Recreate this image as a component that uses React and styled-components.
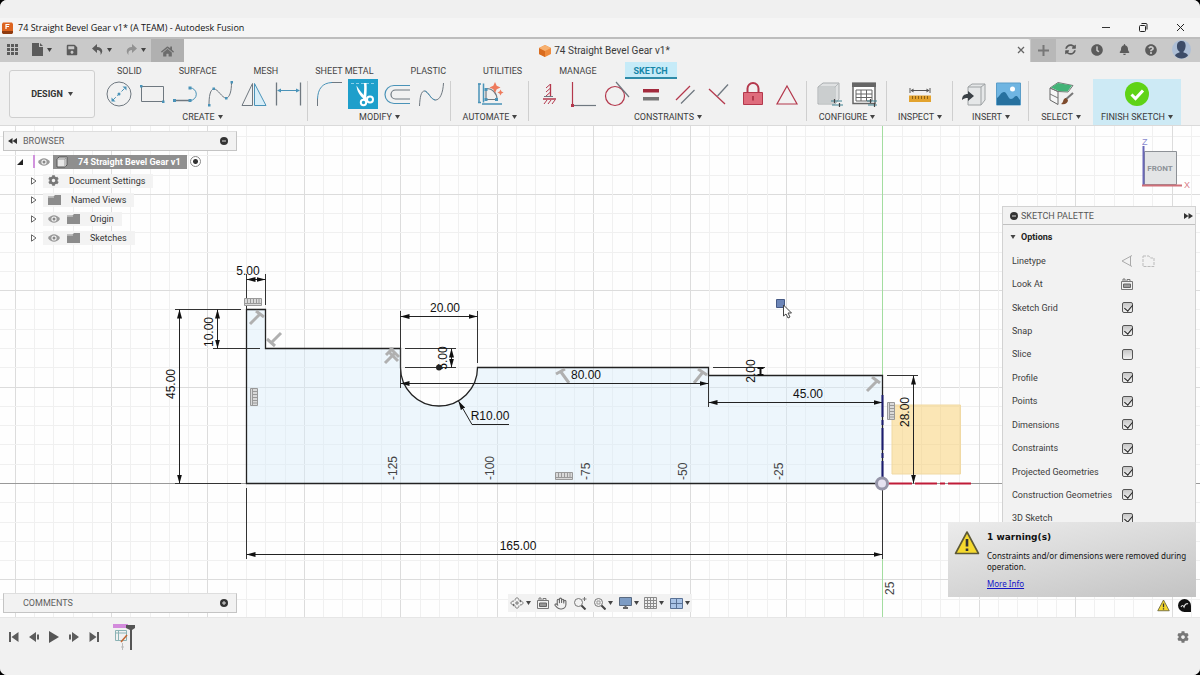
import styled, { createGlobalStyle } from "styled-components"
import { FaBell, FaClock, FaCog, FaHome, FaQuestionCircle, FaSave, FaSyncAlt } from "react-icons/fa"
import { Hand } from "lucide-react"

    const GlobalStyle = createGlobalStyle`
        * { box-sizing: border-box; }
        body {
            margin: 0;
            background: #000;
            color: #3c3c3c;
            font-family: Roboto, "Liberation Sans", sans-serif;
            font-size: 9px;
            line-height: 12px;
        }
        button {
            border: none;
            background: none;
            padding: 0;
            color: inherit;
            font: inherit;
            display: flex;
            align-items: center;
            justify-content: center;
        }
        svg { display: block; flex-shrink: 0; }
    `
    const Window = styled.div`
        min-height: 100vh;
        display: flex;
        flex-direction: column;
        background: #f1f1f1;
        border-radius: 7px;
        overflow: hidden;
    `

    /* ---- title bar and document tabs ---- */
    const TitleBar = styled.header`
        height: 37px;
        padding: 18px 12px 0 2px;
        display: flex;
        align-items: center;
        gap: 5px;
        background: linear-gradient(#f0f0f0 18px, #f5f5f5 18px);
    `
    const Title = styled.h1`
        flex: 1;
        margin: 0;
        font: 400 9px/14px "Open Sans", "Noto Sans", sans-serif;
        color: #111;
    `
    const WindowButtons = styled.div`
        display: flex;
        gap: 22px;
        button { width: 15px; height: 15px; }
    `
    const TabBar = styled.nav`
        height: 25px;
        display: flex;
        align-items: stretch;
        background: #c9c9c9;
        border-top: 2px solid #bdbdbd;
        color: #5b5b5b;
    `
    const QuickTools = styled.div`
        width: 151px;
        padding: 0 0 2px 6px;
        display: flex;
        align-items: center;
        gap: 14px;
    `
    const QuickButton = styled.button`
        gap: 4px;
        color: ${(props)=>props.$dim ? "#8f8f8f" : "#5b5b5b"};
    `
    const HomeTab = styled.button`
        width: 33px;
        padding-top: 2px;
        background: #b0b0b0;
        color: #6c6c6c;
    `
    const DocTab = styled.div`
        flex: 1;
        display: flex;
        align-items: center;
        padding: 0 4px 0 8px;
        background: #f1f1f1;
        border-radius: 0 2px 0 0;
    `
    const DocName = styled.span`
        flex: 1;
        display: flex;
        align-items: center;
        justify-content: center;
        gap: 3px;
        font-size: 10px;
        color: #3a3a3a;
    `
    const NewTab = styled.button`
        width: 25px;
        margin-left: 1px;
        background: #b8b8b8;
        color: #6c6c6c;
    `
    const UserTools = styled.div`
        width: 144px;
        padding: 0 9px 2px;
        display: flex;
        align-items: center;
        justify-content: space-between;
    `

    /* ---- ribbon ---- */
    const Ribbon = styled.section`
        height: 64px;
        padding-right: 19px;
        display: flex;
        background: #f1f1f1;
        border-bottom: 1px solid #dadada;
        box-shadow: 0 1px 1px #ebebeb;
    `
    const Workspace = styled.button`
        width: 86px;
        height: 48px;
        margin: 8px 2px 0 9px;
        gap: 5px;
        border: 1px solid #cfcfcf;
        border-radius: 3px;
        background: #f4f4f4;
        color: #333;
        font-weight: 700;
    `
    const RibbonMain = styled.div`
        flex: 1;
        display: flex;
        flex-direction: column;
    `
    const RibbonTabs = styled.div`
        height: 18px;
        padding-left: 11px;
        display: flex;
        gap: 19px;
    `
    const RibbonTab = styled.button`
        padding: 0 9px;
        color: ${(props)=>props.$active ? "#1586a8" : "#444"};
        font-weight: ${(props)=>props.$active ? 700 : 400};
        background: ${(props)=>props.$active ? "#c6ebf8" : "none"};
        box-shadow: ${(props)=>props.$active ? "inset 0 -2px #2f8ba8" : "none"};
    `
    const Groups = styled.div`
        flex: 1;
        display: flex;
    `
    const Group = styled.div`
        flex: ${(props)=>props.$grow} 1 0;
        display: flex;
        flex-direction: column;
        align-items: center;
        background: ${(props)=>props.$finish
            ? "#cdeaf5"
            : props.$last ? "none" : "linear-gradient(#cfcfcf, #cfcfcf) right 2px / 1px 40px no-repeat"};
    `
    const GroupIcons = styled.div`
        display: flex;
        gap: 4px;
    `
    const ToolButton = styled.button`
        width: 30px;
        height: 30px;
        background: ${(props)=>props.$on ? "#1e9fcb" : "none"};
    `
    const GroupLabel = styled.button`
        height: 16px;
        gap: 3px;
        color: #3c3c3c;
        white-space: nowrap;
    `

    /* ---- canvas ---- */
    const Stage = styled.main`
        position: relative;
        flex: 1;
        min-height: 480px;
        background: #fefefe;
    `
    const Drawing = styled.svg`
        position: absolute;
        inset: 0;
        width: 100%;
        height: 100%;
        font-family: "Liberation Sans", sans-serif;
        font-size: 12px;
        fill: none;
    `
    const Browser = styled.aside`
        position: absolute;
        top: 5px;
        left: 3px;
        width: 234px;
    `
    const Comments = styled.aside`
        position: absolute;
        bottom: 3px;
        left: 3px;
        width: 234px;
    `
    const PanelHead = styled.div`
        height: 20px;
        padding: 0 8px 0 4px;
        margin-bottom: 1px;
        display: flex;
        align-items: center;
        gap: 6px;
        background: #f2f2f2;
        border: 1px solid #c4c4c4;
        border-top-color: #dedede;
        color: #606060;
    `
    const PanelTitle = styled.h2`
        flex: 1;
        margin: 0;
        padding-left: ${(props)=>props.$indent || 0}px;
        font-size: 9px;
        font-weight: 400;
    `
    const TreeRow = styled.div`
        height: 19px;
        padding-left: ${(props)=>props.$root ? 13 : 28}px;
        display: flex;
        align-items: center;
        gap: ${(props)=>props.$root ? 3 : 6}px;
    `
    const TreeItem = styled.div`
        height: 14px;
        padding: 0 8px 0 5px;
        display: flex;
        align-items: center;
        gap: 7px;
        background: rgba(242, 242, 242, 0.9);
    `
    const TreeName = styled.span`
        padding-left: 3px;
        color: #333;
    `
    const RootItem = styled.div`
        height: 14px;
        padding: 0 6px 0 3px;
        display: flex;
        align-items: center;
        gap: 10px;
        background: #8f8f8f;
        color: #fff;
        font-weight: 700;
    `
    const PinkBar = styled.span`
        width: 2px;
        height: 13px;
        margin-left: 6px;
        background: #d193dd;
    `
    const RootRadio = styled.input`
        appearance: none;
        width: 11px;
        height: 11px;
        margin: 0;
        border: 1px solid #888;
        border-radius: 50%;
        background: radial-gradient(#333 0 2px, #fff 3px);
    `
    const Palette = styled.aside`
        position: absolute;
        top: 80px;
        right: 4px;
        bottom: 86px;
        width: 194px;
        display: flex;
        flex-direction: column;
        background: #f2f2f2;
        border: 1px solid #d2d2d2;
    `
    const PaletteHead = styled.div`
        height: 18px;
        padding: 0 2px 0 7px;
        display: flex;
        align-items: center;
        gap: 3px;
        border-bottom: 1px solid #c0c0c0;
        color: #555;
    `
    const OptionsHead = styled.button`
        height: 24px;
        padding-left: 7px;
        justify-content: flex-start;
        gap: 5px;
        color: #222;
        font-weight: 700;
    `
    const OptionList = styled.div`
        flex: 1;
        padding-left: 9px;
        display: flex;
        flex-direction: column;
    `
    const Option = styled.div`
        flex: 1;
        display: flex;
        align-items: center;
        label, span { width: 109px; }
    `
    const LineButtons = styled.div`
        display: flex;
        gap: 8px;
    `
    const Check = styled.input`
        appearance: none;
        width: 11px;
        height: 11px;
        margin: 0 0 0 1px;
        border: 1px solid #555;
        border-radius: 2px;
        background: linear-gradient(#c6c6c6, #f2f2f2);
        &:checked::after {
            content: "";
            display: block;
            width: 4px;
            height: 7px;
            margin: 0 0 0 3px;
            border: solid #222;
            border-width: 0 1px 1px 0;
            transform: rotate(40deg);
        }
    `
    const ViewCube = styled.svg`
        position: absolute;
        top: 10px;
        right: 8px;
    `
    const NavBar = styled.div`
        position: absolute;
        bottom: 5px;
        left: 0;
        right: 0;
        width: 184px;
        height: 18px;
        margin: 0 auto;
        padding: 0 2px;
        display: flex;
        align-items: center;
        justify-content: space-between;
        background: #f2f2f2;
        button { gap: 2px; }
    `
    const Warning = styled.div`
        position: absolute;
        right: 4px;
        bottom: 20px;
        width: 248px;
        height: 75px;
        padding: 8px 4px 0 6px;
        display: flex;
        gap: 7px;
        background: linear-gradient(168deg, #ececec, #d8d8d8 50%, #c3c3c3);
        color: #111;
        font-family: "Noto Sans", sans-serif;
        font-size: 8px;
        line-height: 11px;
        p { margin: 0 0 6px; }
    `
    const WarningTitle = styled.h3`
        margin: 0 0 6px;
        font: 700 9px/14px "DejaVu Sans", sans-serif;
    `
    const WarningLink = styled.a`
        color: #1414c8;
    `
    const StatusIcons = styled.div`
        position: absolute;
        right: 9px;
        bottom: 5px;
        display: flex;
        gap: 8px;
    `
    const Timeline = styled.footer`
        height: 58px;
        padding: 0 11px 0 7px;
        display: flex;
        align-items: flex-start;
        background: #f1f1f1;
        border-top: 1px solid #e6e6e6;
    `
    const PlayButtons = styled.div`
        flex: 1;
        padding: 12px 0 0;
        display: flex;
        gap: 7px;
        button { width: 13px; height: 14px; }
        button:last-of-type { margin-right: 6px; }
    `
    const Feature = styled.div`
        margin-top: -6px;
    `
    const SettingsButton = styled.button`
        margin-top: 12px;
        height: 14px;
        color: #777;
    `

function Caret ({size = 5}) {
    return (
        <svg width={size} height="4" viewBox="0 0 5 4"><path d="M0 0h5L2.5 4z" fill="#444" /></svg>
    )
}

function Svg ({w, h, children, ...rest}) {
    return <svg width={w} height={h} viewBox={`0 0 ${w} ${h}`} fill="none" {...rest}>{children}</svg>
}

const G = "#6f7880"
const B = "#4a93b8"
const R = "#b4384c"

/* Every ribbon icon is drawn on a 30 x 30 field */
const icons = {
    circle: <><circle cx="16" cy="15" r="12" stroke={G} /><path d="M10 21 22 9" stroke={B} strokeDasharray="4 2" /><path d="M8.500 22.500h4l-4-4zM23.500 7.500h-4l4 4z" fill={B} /><circle cx="16" cy="15" r="1.500" fill={B} /></>,
    rect: <><path d="M4.500 7.500h22v15h-22z" stroke={G} /><path d="M3 6h2.500v2.500H3zM25 21.500h2.500V24H25z" fill={B} /></>,
    line: <><path d="M3 21.500h16" stroke={G} strokeWidth="1.300" /><path d="M19 21.500a6.300 6.300 0 0 0 0-12.600" stroke={B} /><path d="M2 20h3v3H2zM17.500 20h3v3h-3zM17.500 7.500h3v3h-3z" fill={B} /></>,
    spline: <><path d="M4 26C4 18 5 10 9 10s8 9 12 9 5.500-8 5.500-15" stroke={G} /><path d="M3 25h2.500v2.500H3zM7.500 8.500h2.500V11H7.500zM20 18h2.500v2.500H20zM25.500 2H28v2.500h-2.500z" fill={B} /></>,
    mirror: <><path d="M3 26.500 13.500 4.500v22z" stroke={G} /><path d="M15.500 4.500v22H27z" fill="#d9eef8" stroke={B} /></>,
    dim: <><path d="M3.500 3.500v23M27.500 3.500v23" stroke={G} strokeWidth="1.300" /><path d="M5 11.500h21" stroke={B} /><path d="m4 11.500 4-2v4zM27 11.500l-4-2v4z" fill={B} /></>,
    fillet: <><path d="M3.500 27v-8M17 3.500h11" stroke={G} /><path d="M3.500 20C4 10 8 4 18 3.500" stroke={B} /></>,
    trim: <><path d="M3 4.500h24" stroke="#8ad0ea" strokeDasharray="3 2" /><path d="M8.500 6.500c.5 6 3 10 8.500 14.500l2-2C14.500 15.500 11.500 11.500 8.500 6.500z" fill="#fff" /><path d="M16 4h2.500c.5 6 0 11-.5 17l-3-.5c1-6 1.500-10 1-16.500z" fill="#fff" /><circle cx="15.500" cy="23.500" r="2.700" stroke="#fff" strokeWidth="2" /><circle cx="22" cy="20.500" r="3" stroke="#fff" strokeWidth="2" /></>,
    offset: <><path d="M28 6.500H12a9 9 0 0 0 0 18h16" stroke={B} strokeWidth="1.200" /><path d="M28 11H13.500a4.500 4.500 0 0 0 0 9H28" stroke={G} strokeWidth="1.200" /></>,
    curve: <><path d="M3.500 27C4 18 5 12 8.500 12S15 21 19.500 21 27 14 27.500 4" stroke={G} /><path d="M8.500 12c3.500 0 6.500 9 11 9" stroke={B} /></>,
    automate: <><path d="M4 4.500v19M8.500 4.500v19" stroke={B} strokeWidth="1.500" /><path d="M3 5h3M3 23.500h3M7 25h20" stroke={B} strokeWidth="1.500" /><path d="M11 9.500v11h11c0-6-4-11-11-11z" stroke={G} strokeWidth="1.200" /><path d="M9.500 19h3v3h-3zM20 19h3v3h-3zM9.500 9h3v3h-3z" fill={B} /><path d="m20 3 1.700 3.800L25.500 8.500l-3.800 1.700L20 14l-1.700-3.800-3.800-1.700 3.800-1.700zM25.500 10.500l1 2 2 1-2 1-1 2-1-2-2-1 2-1z" fill="#ee7a5c" /></>,
    fixed: <><path d="M16.500 5v12M9 20h13" stroke={R} strokeWidth="1.300" /><path d="m12 9 4-3.500M12 13l4-3.500M12 17l4-3.500M10 25l3-4M14 25l3-4M18 25l3-4" stroke={R} /><path d="M10 17.500h9" stroke={G} /></>,
    corner: <><path d="M4.500 3v23" stroke={R} strokeWidth="1.200" /><path d="M4.500 26.500H28" stroke={G} strokeWidth="1.200" /><path d="M3 25h3v3H3z" fill={R} /></>,
    tangent: <><circle cx="13" cy="17" r="9.500" stroke={R} strokeWidth="1.200" /><path d="M14 3l13 15" stroke={G} strokeWidth="1.200" /></>,
    equal: <><path d="M7 10h16v3.500H7z" fill="#a32a3d" /><path d="M7 18h16v3.500H7z" fill="#777" /></>,
    parallel: <><path d="m6 21 14-14" stroke={R} strokeWidth="1.300" /><path d="M11 24.500 24.500 11" stroke={G} strokeWidth="1.300" /></>,
    perpendicular: <><path d="m5 10 16 15" stroke={R} strokeWidth="1.300" /><path d="M24 5.500 13.500 17" stroke={G} strokeWidth="1.300" /></>,
    lock: <><path d="M9.500 13V9.500a5.500 5.500 0 0 1 11 0V13" stroke={R} strokeWidth="2" /><path d="M5.500 13.500h19v12h-19z" fill="#df6c7c" stroke={R} /><path d="M15 17v4.500" stroke="#a32a3d" strokeWidth="1.500" /></>,
    triangle: <path d="M15 7 25 25H5z" stroke={R} strokeWidth="1.200" />,
    configure: <><path d="m3 8 5-4h16v16l-4 5H3z" fill="#dfe1e2" stroke="#a9adaf" /><path d="M3 8h17l4-4M20 8v17" stroke="#b5b9bb" /><path d="M4 8.500h15.500v16H4z" fill="#cbcecf" /><path d="M16 22h11M17 26h11" stroke="#3f8192" strokeWidth="1.200" /><path d="M19.500 20v4M24.500 24v4" stroke="#444" strokeWidth="1.200" /></>,
    table: <><path d="M4 4.500h22v20H4z" fill="#fff" stroke="#666" strokeWidth="1.500" /><path d="M3 3.500h24V8H3z" fill="#666" /><path d="M7 11h16v11H7zM7 15h16M7 18.500h16M12 11v11M17.500 11v11" stroke="#666" /><path d="M18 22h10M19 26h9" stroke="#3f8192" strokeWidth="1.200" /><path d="M21.500 20v4M25.500 24v4" stroke="#444" strokeWidth="1.200" /></>,
    ruler: <><path d="M5 9v5M25 9v5M6 11.500h18" stroke="#555" /><path d="m5.500 11.500 3-2v4zM24.500 11.500l-3-2v4z" fill="#555" /><path d="M4 16.500h22v6.500H4z" fill="#e3a32e" /><path d="M7.500 17v3M10.500 17v3M13.500 17v3M16.500 17v3M19.500 17v3M22.500 17v3" stroke="#8e6216" /></>,
    insert: <><path d="m9 8 4-3h13v16l-4 5H9z" fill="#e5e7e8" stroke="#9ea2a4" /><path d="M9 8h13l4-3M22 8v18" stroke="#9ea2a4" /><path d="M3 21c0-4 2-6 6-6v-3l6 5-6 5v-3c-3 0-4 .5-6 2z" fill="#3b4146" /></>,
    picture: <><path d="M3.500 4h24v22h-24z" fill="#6fb5e2" stroke="#5a9dc8" /><circle cx="19.500" cy="10" r="2.500" fill="#fff" /><path d="M4 19c3-2 4-6 7-6s4 7 7 7 3-3 5-3 2 2 4 4v5H4z" fill="#27719f" /></>,
    select: <><path d="m4 9 8 3.500v13L4 21z" fill="#f6f6f6" stroke="#666" /><path d="m4 15 8 4M4 9l8-5.500 15 3-5 6.500-10-.5z" stroke="#777" /><path d="m5 8.500 7-4.500 14 2.500-4.500 6-9-.5z" fill="#43b377" /><path d="m27 14-9 8" stroke="#777" strokeWidth="2" /><path d="M20 19c-3 0-2 4-5 6 4 1 7-1 7-4z" fill="#7e4a2c" /></>,
    finish: <><circle cx="15" cy="15" r="12" fill="#5fd316" /><path d="m9.500 15.500 4 4 7.500-8" stroke="#fff" strokeWidth="3" /></>,
}

const ribbonTabs = ["SOLID", "SURFACE", "MESH", "SHEET METAL", "PLASTIC", "UTILITIES", "MANAGE", "SKETCH"]

const groups = [
    {name: "CREATE", grow: 211, tools: ["circle", "rect", "line", "spline", "mirror", "dim"]},
    {name: "MODIFY", grow: 143, tools: ["fillet", "trim", "offset", "curve"]},
    {name: "AUTOMATE", grow: 78, tools: ["automate"]},
    {name: "CONSTRAINTS", grow: 278, tools: ["fixed", "corner", "tangent", "equal", "parallel", "perpendicular", "lock", "triangle"]},
    {name: "CONFIGURE", grow: 80, tools: ["configure", "table"]},
    {name: "INSPECT", grow: 66, tools: ["ruler"]},
    {name: "INSERT", grow: 76, tools: ["insert", "picture"]},
    {name: "SELECT", grow: 64, tools: ["select"], last: true},
    {name: "FINISH SKETCH", grow: 88, tools: ["finish"], finish: true},
]

const options = [
    ["Sketch Grid", true], ["Snap", true], ["Slice", false], ["Profile", true],
    ["Points", true], ["Dimensions", true], ["Constraints", true],
    ["Projected Geometries", true], ["Construction Geometries", true], ["3D Sketch", true],
]

function Eye () {
    return (
        <Svg w={12} h={8}>
            <path d="M0 4C3-1 9-1 12 4 9 9 3 9 0 4z" fill="#999" />
            <circle cx="6" cy="4" r="2.600" fill="#f4f4f4" /><circle cx="6" cy="4" r="1.500" fill="#888" />
        </Svg>
    )
}

function Folder () {
    return <Svg w={13} h={10}><path d="M0 1.500h5.500l1.500-1.500h6v10H0z" fill="#8c8c8c" /><path d="M0 2.500h6" stroke="#b5b5b5" /></Svg>
}

function Expander () {
    return <Svg w={6} h={8}><path d="M.5.800 5 4 .500 7.200z" stroke="#666" fill="#fff" /></Svg>
}

function Dot ({sign}) {
    return (
        <Svg w={8} h={8}>
            <circle cx="4" cy="4" r="4" fill="#333" /><path d={sign === "+" ? "M2 4h4M4 2v4" : "M2 4h4"} stroke="#ddd" />
        </Svg>
    )
}

function Chevrons ({flip}) {
    return <Svg w={9} h={6} transform={flip ? "scale(-1 1)" : undefined}><path d="M4.500 0v6L0 3zM9 0v6L4.500 3z" fill="#333" /></Svg>
}

function WarnSign ({size}) {
    return (
        <svg width={size} height={size} viewBox="0 0 26 26" fill="none">
            <path d="M13 2 24.500 23.500H1.500z" fill="#f5d92e" stroke="#5d5937" strokeWidth="1.600" strokeLinejoin="round" />
            <path d="M13 9v7.500M13 18.500v2.500" stroke="#333" strokeWidth="2.600" />
        </svg>
    )
}

/* ---- sketch geometry ---- */
const STEP = 19.28
const ORIGIN = {x: 882.3, y: 483.5}

function Grid () {
    const lines = []
    for (let i = -46; i <= 60; i++) {
        const x = Math.round(ORIGIN.x + i * STEP) + 0.5
        const y = Math.floor(ORIGIN.y + i * STEP) + 0.5
        const color = i % 5 === 0 ? "#dcdcdc" : "#f0f0f0"
        lines.push(<path key={`v${i}`} d={`M${x} 0V2000`} stroke={color} />)
        lines.push(<path key={`h${i}`} d={`M0 ${y}H3000`} stroke={color} />)
    }
    return <g>{lines}</g>
}

function Dimension ({x1, y1, x2, y2, label, tx, ty}) {
    const vertical = x1 === x2
    return (
        <g>
            <path d={`M${x1} ${y1}L${x2} ${y2}`} stroke="#222" markerStart="url(#arrow)" markerEnd="url(#arrow)" />
            <Value x={tx} y={ty} turned={vertical}>{label}</Value>
        </g>
    )
}

function Value ({x, y, turned, children}) {
    return (
        <text
            transform={`translate(${x} ${y})${turned ? " rotate(-90)" : ""}`}
            y="4"
            textAnchor="middle"
            fill="#111"
        >{children}</text>
    )
}

function RulerMark ({x, y, turned}) {
    return (
        <g transform={`translate(${x} ${y})${turned ? " rotate(90)" : ""}`}>
            <path d="M-8.500-3.500h17v7h-17z" fill="#d9d9d9" stroke="#999" />
            <path d="M-5.500-3v4M-2.500-3v4M.500-3v4M3.500-3v4M6-3v4M-8 1.500H8" stroke="#999" />
        </g>
    )
}

function SketchCanvas () {
    const marks = [
        "M250 324 260 314M256 311 264 317", "M281 333 271 343M267 339 275 346",
        "M385 363 395 353M390 348 399 357", "M398 361 389 352M386 355 393 348",
        "M569 383 561 372M556 374 565 369", "M694 383 703 372M698 369 707 375",
        "M867 391 877 381M872 377 880 383",
    ]
    return (
        <Drawing aria-label="Sketch">
            <defs>
                <marker id="arrow" markerWidth="10" markerHeight="6" refX="9" refY="3" orient="auto-start-reverse" markerUnits="userSpaceOnUse">
                    <path d="M0 .500 9 3 0 5.500z" fill="#111" />
                </marker>
            </defs>
            {/* coordinates are measured from the top of the window */}
            <g transform="translate(0 -126)">
                <Grid />
                <path d="M0 483.500H3000" stroke="#999" />
                <path d="M882.500 0V2000" stroke="#a3dda0" />
                <path
                    d="M246.500 309.500H265.500V348.500H400.500V367.500A38.500 38.500 0 0 0 477.500 367.500H708.500V375.500H882.500V483.500H246.500z"
                    fill="rgba(214, 236, 250, 0.42)" stroke="#222" strokeWidth="1.300"
                />
                <path d="M892 405h68.500v69H892z" fill="rgba(248, 210, 120, 0.55)" stroke="#f0d9a4" />
                <g stroke="#333">
                    <path d="M246.500 274V309M265.500 274V305M175 309.500H241M213 348.500H260M175 483.500H241" />
                    <path d="M246.500 488V559M882.500 488V559M400.500 311V388M477.500 311V363M405 348.500H456M405 367.500H456" />
                    <path d="M708.500 375V407M713 367.500H765M887 375.500H918" />
                </g>
                <g stroke="#b0b0b0" strokeWidth="3">{marks.map((d)=><path key={d} d={d} />)}</g>
                <RulerMark x={253} y={302} />
                <RulerMark x={564} y={476} />
                <RulerMark x={254} y={397} turned />
                <RulerMark x={891} y={411} turned />
                <Dimension x1={246.5} y1={279.5} x2={265.5} y2={279.5} label="5.00" tx={248} ty={271} />
                <Dimension x1={217.5} y1={309.5} x2={217.5} y2={348.5} label="10.00" tx={209} ty={332} />
                <Dimension x1={179.5} y1={309.5} x2={179.5} y2={483.5} label="45.00" tx={171} ty={384} />
                <Dimension x1={400.5} y1={316.5} x2={477.5} y2={316.5} label="20.00" tx={445} ty={308} />
                <Dimension x1={451.5} y1={348.5} x2={451.5} y2={367.5} label="5.00" tx={443} ty={358} />
                <Dimension x1={400.5} y1={383.5} x2={708.5} y2={383.5} label="80.00" tx={586} ty={375} />
                <Dimension x1={708.5} y1={402.5} x2={882.5} y2={402.5} label="45.00" tx={808} ty={394} />
                <Dimension x1={913.5} y1={375.5} x2={913.5} y2={483.5} label="28.00" tx={905} ty={412} />
                <Dimension x1={246.5} y1={554.5} x2={882.5} y2={554.5} label="165.00" tx={518} ty={546} />
                <path d="M760.500 367V376M757.500 368h6M757.500 375h6" stroke="#111" strokeWidth="2" />
                <Value x={751} y={371} turned>2.00</Value>
                <path d="M458.500 401 472 424.500H509" stroke="#222" markerStart="url(#arrow)" />
                <Value x={490} y={416}>R10.00</Value>
                <circle cx="439" cy="367.500" r="3" fill="#222" />
                {[-125, -100, -75, -50, -25].map((n)=>(
                    <text key={n} transform={`translate(${Math.round(ORIGIN.x + n * STEP / 5) - 3} 480) rotate(-90)`} fill="#444">{n}</text>
                ))}
                <text transform="translate(894 595) rotate(-90)" fill="#444">25</text>
                <path d="M882.500 395V478" stroke="#1c1c70" strokeWidth="2" strokeDasharray="22 3 5 3" />
                <path d="M888 483.500H971" stroke="#c01c38" strokeWidth="2" strokeDasharray="24 3 22 3 5 3" />
                <circle cx="882" cy="483.500" r="5.500" fill="#e6e2f0" stroke="#9695a8" strokeWidth="3" />
                <path d="M776.500 299.500h8v8h-8z" fill="#6d86b8" stroke="#465a85" />
                <path d="M783.500 305v11l2.500-2 2 4 2-1-2-4h3.500z" fill="#fff" stroke="#444" />
            </g>
        </Drawing>
    )
}

function TreeNode ({name, icon, eye}) {
    return (
        <TreeRow>
            <Expander />
            <TreeItem>
                {eye && <Eye />}
                {icon}
                <TreeName>{name}</TreeName>
            </TreeItem>
        </TreeRow>
    )
}

function BrowserPanel () {
    return (
        <Browser>
            <PanelHead>
                <Chevrons />
                <PanelTitle>BROWSER</PanelTitle>
                <Dot sign="-" />
            </PanelHead>
            <TreeRow $root>
                <Svg w={8} h={8}><path d="M7 1v6H1z" fill="#222" /></Svg>
                <PinkBar />
                <Eye />
                <RootItem>
                    <Svg w={12} h={12}><path d="m1 3 2-2h8v8l-2 2H1z" fill="#e8e8e8" stroke="#555" /><path d="M1 3h8v8M9 3l2-2" stroke="#999" /></Svg>
                    74 Straight Bevel Gear v1
                </RootItem>
                <RootRadio type="radio" defaultChecked aria-label="Activate component" />
            </TreeRow>
            <TreeNode name="Document Settings" icon={<FaCog size={11} color="#777" />} />
            <TreeNode name="Named Views" icon={<Folder />} />
            <TreeNode name="Origin" icon={<Folder />} eye />
            <TreeNode name="Sketches" icon={<Folder />} eye />
        </Browser>
    )
}

function LookAtIcon () {
    return <Svg w={12} h={12}><path d="M.500 3.500h11v8H.500zM2 3V1h2v2M6 3V1.500h3V3" stroke="#777" /><path d="M2.500 6h7v3.500h-7z" fill="#999" stroke="#666" /></Svg>
}

function SketchPalette () {
    return (
        <Palette>
            <PaletteHead>
                <Dot sign="-" />
                <PanelTitle>SKETCH PALETTE</PanelTitle>
                <Chevrons flip />
            </PaletteHead>
            <OptionsHead><Caret size={6} /> Options</OptionsHead>
            <OptionList>
                <Option>
                    <span>Linetype</span>
                    <LineButtons>
                        <button aria-label="Construction"><Svg w={13} h={12}><path d="M11 .500 1 6l10 5.500M9.500 1v10" stroke="#aaa" /></Svg></button>
                        <button aria-label="Centerline"><Svg w={13} h={12}><path d="M1 1h6l1.500 2H12v8.500H1z" stroke="#bbb" strokeDasharray="3 1" /></Svg></button>
                    </LineButtons>
                </Option>
                <Option>
                    <span>Look At</span>
                    <button aria-label="Look At"><LookAtIcon /></button>
                </Option>
                {options.map(([name, on])=>(
                    <Option key={name}>
                        <label htmlFor={name}>{name}</label>
                        <Check type="checkbox" id={name} defaultChecked={on} />
                    </Option>
                ))}
            </OptionList>
        </Palette>
    )
}

function NavigationBar () {
    return (
        <NavBar>
            <button aria-label="Orbit"><Svg w={14} h={12}><path d="M5 3.500c0-3.500 4-3.500 4 0M5 8.500c0 3.500 4 3.500 4 0M4 4C0 4 0 8 4 8M10 4c4 0 4 4 0 4M7 4v4M5 6h4" stroke="#777" /><path d="m3 6.500 2 1.500-2 1.500zM11 5.500 9 4l2-1.500z" fill="#666" /></Svg><Caret /></button>
            <button aria-label="Look at"><LookAtIcon /></button>
            <button aria-label="Pan"><Hand size={13} color="#666" /></button>
            <button aria-label="Zoom"><Svg w={14} h={13}><circle cx="5.500" cy="5.500" r="4" stroke="#777" /><path d="m8.500 8.500 4 4" stroke="#444" strokeWidth="2" /><path d="M11.500 0v4M9.500 2h4" stroke="#777" /></Svg></button>
            <button aria-label="Fit"><Svg w={13} h={13}><circle cx="5.500" cy="5.500" r="4" stroke="#777" /><path d="M4 4h3v3H4z" stroke="#999" /><path d="m8.500 8.500 4 4" stroke="#444" strokeWidth="2" /></Svg><Caret /></button>
            <button aria-label="Display settings"><Svg w={13} h={12}><path d="M.500.500h12v8H.500z" fill="#7d9cc4" stroke="#5a6a80" /><path d="M4 11h5M6.500 9v2" stroke="#666" strokeWidth="2" /></Svg><Caret /></button>
            <button aria-label="Grid and snaps"><Svg w={13} h={12}><path d="M.500.500h12v11H.500zM3.500 0v12M6.500 0v12M9.500 0v12M0 3.500h13M0 6.500h13M0 9.500h13" stroke="#8a8a8a" fill="#eee" /></Svg><Caret /></button>
            <button aria-label="Viewports"><Svg w={13} h={11}><path d="M.500.500h12v10H.500z" fill="#a9c3e6" stroke="#5a7296" /><path d="M6.500 0v11M0 5.500h13" stroke="#5a7296" /></Svg><Caret /></button>
        </NavBar>
    )
}

function App () {
    return (
    <>
        <GlobalStyle />
        <Window>
            <TitleBar>
                <Svg w={11} h={14}><path d="M1 1.500h9l1 1.500v8l-1 2H1L0 11V3z" fill="#dd6420" /><path d="M0 10h11v1.500L10 13H1L0 11.500z" fill="#8f3b10" /><path d="M4 8V3.500h3.500M4 5.500h3" stroke="#fff" strokeWidth="1.200" /></Svg>
                <Title>74 Straight Bevel Gear v1* (A TEAM) - Autodesk Fusion</Title>
                <WindowButtons>
                    <button aria-label="Minimize"><Svg w={9} h={9}><path d="M0 4.500h8" stroke="#333" /></Svg></button>
                    <button aria-label="Restore"><Svg w={9} h={9}><rect x=".5" y="2.500" width="6" height="6" rx="1" stroke="#222" /><path d="M2.500 1q0-.5.5-.5h4q1 0 1 1v5" stroke="#222" /></Svg></button>
                    <button aria-label="Close"><Svg w={9} h={9}><path d="m1 1 7 7M8 1 1 8" stroke="#222" /></Svg></button>
                </WindowButtons>
            </TitleBar>

            <TabBar>
                <QuickTools>
                    <QuickButton aria-label="Data panel"><Svg w={12} h={12}><path d="M1 0h3v3H1zM5 0h3v3H5zM9 0h3v3H9zM1 4h3v3H1zM5 4h3v3H5zM9 4h3v3H9zM1 8h3v3H1zM5 8h3v3H5zM9 8h3v3H9z" fill="#5b5b5b" /></Svg></QuickButton>
                    <QuickButton aria-label="File"><Svg w={11} h={13}><path d="M0 0h7v4h4v9H0zM8 0l3 3H8z" fill="#5b5b5b" /></Svg><Caret /></QuickButton>
                    <QuickButton aria-label="Save"><FaSave size={12} /></QuickButton>
                    <QuickButton aria-label="Undo"><Svg w={11} h={11}><path d="m5 0-5 4.500L5 9V6c3 0 4 2 3.500 5C12 7 10 3 5 3z" fill="#5b5b5b" /></Svg><Caret /></QuickButton>
                    <QuickButton aria-label="Redo" $dim><Svg w={11} h={11}><path d="m6 0 5 4.500L6 9V6C3 6 2 8 2.500 11-1 7 1 3 6 3z" fill="#929292" /></Svg><Caret /></QuickButton>
                </QuickTools>
                <HomeTab aria-label="Home"><FaHome size={13} /></HomeTab>
                <DocTab>
                    <DocName>
                        <Svg w={12} h={12}><path d="M6 0 12 3v6l-6 3-6-3V3z" fill="#ef8b3c" /><path d="m0 3 6 3v6l-6-3z" fill="#d96c1f" /><path d="m6 0 6 3-6 3-6-3z" fill="#f7b06f" /></Svg>
                        74 Straight Bevel Gear v1*
                    </DocName>
                    <button aria-label="Close document"><Svg w={9} h={9}><path d="m1 1 6 6M7 1 1 7" stroke="#666" strokeWidth="1.300" /></Svg></button>
                </DocTab>
                <NewTab aria-label="New design"><Svg w={11} h={11}><path d="M5.500 0v11M0 5.500h11" stroke="#777" strokeWidth="2" /></Svg></NewTab>
                <UserTools>
                    <button aria-label="Extensions"><FaSyncAlt size={11} /></button>
                    <button aria-label="Job status"><FaClock size={12} /></button>
                    <button aria-label="Notifications"><FaBell size={11} /></button>
                    <button aria-label="Help"><FaQuestionCircle size={12} /></button>
                    <button aria-label="Account"><Svg w={19} h={19}><circle cx="9.500" cy="9.500" r="9.500" fill="#aebfd6" /><path d="M9.500 1C13 1 14 4 13.500 7c-.3 2-1 4-2 4.500v1c3 .5 4 1.500 4.500 3-3 4-10 4-13 0 .5-1.500 2-2.500 4.500-3v-1C6 11 5 9 5 7c-.3-3 1-6 4.500-6z" fill="#3d4c68" /></Svg></button>
                </UserTools>
            </TabBar>

            <Ribbon>
                <Workspace>DESIGN <Caret /></Workspace>
                <RibbonMain>
                    <RibbonTabs>
                        {ribbonTabs.map((t)=><RibbonTab key={t} $active={t === "SKETCH"}>{t}</RibbonTab>)}
                    </RibbonTabs>
                    <Groups>
                        {groups.map((g)=>(
                            <Group key={g.name} $grow={g.grow} $finish={g.finish} $last={g.last}>
                                <GroupIcons>
                                    {g.tools.map((t)=>(
                                        <ToolButton key={t} $on={t === "trim"} aria-label={t}>
                                            <Svg w={30} h={30}>{icons[t]}</Svg>
                                        </ToolButton>
                                    ))}
                                </GroupIcons>
                                <GroupLabel>{g.name} <Caret /></GroupLabel>
                            </Group>
                        ))}
                    </Groups>
                </RibbonMain>
            </Ribbon>

            <Stage>
                <SketchCanvas />
                <BrowserPanel />
                <ViewCube width="50" height="54" viewBox="0 0 50 54" fill="none">
                    <text x="0" y="9" fontFamily="Liberation Sans" fontSize="9" fill="#8b8bd0">Z</text>
                    <path d="M2.500 15.500h32v33h-32z" fill="#e3e5e6" stroke="#8d9196" />
                    <path d="M1.500 10v40" stroke="#6a68b8" strokeWidth="2" />
                    <path d="M0 49.500h40" stroke="#cf6f78" strokeWidth="2" />
                    <text x="18" y="35" textAnchor="middle" fontFamily="Roboto" fontSize="8" fontWeight="700" fill="#8d9298">FRONT</text>
                    <text x="42" y="52" fontFamily="Liberation Sans" fontSize="9" fill="#d9808a">X</text>
                </ViewCube>
                <SketchPalette />
                <Comments>
                    <PanelHead>
                        <PanelTitle $indent={15}>COMMENTS</PanelTitle>
                        <Dot sign="+" />
                    </PanelHead>
                </Comments>
                <NavigationBar />
                <Warning role="alert">
                    <WarnSign size={26} />
                    <div>
                        <WarningTitle>1 warning(s)</WarningTitle>
                        <p>Constraints and/or dimensions were removed during operation.</p>
                        <WarningLink href="#info">More Info</WarningLink>
                    </div>
                </Warning>
                <StatusIcons>
                    <WarnSign size={13} />
                    <Svg w={13} h={13}><path d="M6.500 0A6.500 6.500 0 0 1 13 6.500V13H6.500a6.500 6.500 0 0 1 0-13z" fill="#111" /><path d="M3 8c1-2 2-2 3 0 1-3 3-4 4-3" stroke="#ddd" strokeWidth="1.200" /></Svg>
                </StatusIcons>
            </Stage>

            <Timeline>
                <PlayButtons>
                    <button aria-label="Go to start"><Svg w={10} h={10}><path d="M0 0h2v10H0zM9.500 0v10L2.500 5z" fill="#5c5c5c" /></Svg></button>
                    <button aria-label="Step back"><Svg w={10} h={10}><path d="M7 0v10L0 5zM8 2.500h2v5H8z" fill="#5c5c5c" /></Svg></button>
                    <button aria-label="Play"><Svg w={10} h={12}><path d="M0 0v12l10-6z" fill="#555" /></Svg></button>
                    <button aria-label="Step forward"><Svg w={10} h={10}><path d="M3 0v10l7-5zM0 2.500h2v5H0z" fill="#5c5c5c" /></Svg></button>
                    <button aria-label="Go to end"><Svg w={10} h={10}><path d="M8 0h2v10H8zM.500 0v10l7-5z" fill="#5c5c5c" /></Svg></button>
                    <Feature>
                        <Svg w={23} h={27}>
                            <path d="M0 0h15v4H0z" fill="#d38bdc" />
                            <path d="M2.500 6.500h11v10h-11zM5.500 6v11M3 9h10" stroke="#8bb3b5" />
                            <path d="m8 18 6-7" stroke="#c1652f" strokeWidth="1.500" />
                            <path d="M9.500 19v7M8 23h3" stroke="#bbb" />
                            <path d="M13 1h9v3l-3 2v20h-2V6l-4-2z" fill="#555" />
                        </Svg>
                    </Feature>
                </PlayButtons>
                <SettingsButton aria-label="Timeline settings"><FaCog size={12} /></SettingsButton>
            </Timeline>
        </Window>
    </>
    );
}

export default App;
